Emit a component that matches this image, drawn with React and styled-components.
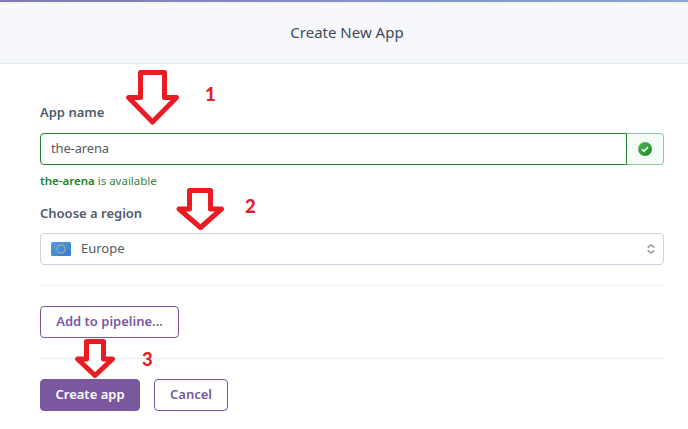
import React from 'react';
import styled, { createGlobalStyle } from 'styled-components';

const GlobalStyle = createGlobalStyle`
  * { box-sizing: border-box; }
  body {
    margin: 0;
    background: #fff;
    font-family: "Noto Sans", "Open Sans", sans-serif;
    font-size: 13px;
    color: #596981;
  }
`;

const Page = styled.div`
  position: relative;
  width: 688px;
  height: 429px;
  overflow: hidden;
  background: #fff;
`;

const Header = styled.header`
  height: 64px;
  padding: 1px 0 0 6px;
  display: flex;
  align-items: center;
  justify-content: center;
  background: linear-gradient(#eeeff6, #f7f8fc 5px);
  border-bottom: 1px solid #e3e7ef;
  position: relative;
`;

const AccentBar = styled.div`
  position: absolute;
  inset: 0 0 auto 0;
  height: 2px;
  background: linear-gradient(90deg, #8078b4, #8494c8 60%, #8ba6d2);
`;

const Title = styled.h1`
  margin: 0;
  font-size: 15px;
  font-weight: 400;
  line-height: 20px;
  color: #3f4a5a;
`;

const Form = styled.form`
  display: flex;
  flex-direction: column;
  width: 624px;
  margin-left: 40px;
  padding-top: 38px;
`;

const Label = styled.label`
  height: 20px;
  line-height: 20px;
  font-weight: 600;
  color: #4f5b6c;
`;

const InputGroup = styled.div`
  display: flex;
  height: 32px;
  margin-top: 11px;
`;

const TextInput = styled.input`
  width: 587px;
  height: 32px;
  padding: 0 10px 2px;
  border: 1px solid #24802c;
  border-radius: 4px 0 0 4px;
  outline: none;
  background: #fff;
  font: inherit;
  color: #565b66;
  letter-spacing: -0.15px;
`;

const InputStatus = styled.div`
  flex: 1;
  display: flex;
  align-items: center;
  justify-content: center;
  background: #f5fbf7;
  border: 1px solid #92c99c;
  border-left: 0;
  border-radius: 0 4px 4px 0;
`;

const Hint = styled.div`
  height: 16px;
  margin: 8px 0 14px;
  line-height: 16px;
  font-size: 11.5px;
  color: #3c8245;
  strong { font-weight: 600; color: #22802b; }
`;

const Select = styled.div`
  height: 32px;
  margin-top: 10px;
  padding: 0 8px 0 10px;
  display: flex;
  align-items: center;
  border: 1px solid #cfd0e0;
  border-radius: 4px;
  background: #fff;
  color: #565b66;
`;

const SelectValue = styled.span`
  flex: 1;
  margin-left: 10px;
  padding-bottom: 2px;
`;

const Divider = styled.hr`
  width: 100%;
  height: 1px;
  margin: 20px 0;
  border: 0;
  background: #ebeef3;
`;

const Actions = styled.div`
  display: flex;
  gap: 14px;
`;

const Button = styled.button`
  width: ${(p) => p.$width}px;
  height: 32px;
  padding: 0 0 2px;
  border: 1px solid #79589f;
  border-radius: 4px;
  background: ${(p) => (p.$primary ? '#79589f' : '#fff')};
  color: ${(p) => (p.$primary ? '#fff' : '#79589f')};
  font: inherit;
  font-weight: 600;
  white-space: nowrap;
`;

const Annotation = styled.div`
  position: absolute;
  left: ${(p) => p.$x}px;
  top: ${(p) => p.$y}px;
  line-height: 0;
`;

const StepNumber = styled(Annotation)`
  font: 900 18.5px/24px Lato, sans-serif;
  color: #de2228;
`;

function Arrow({ x, y, width, height, points }) {
  return (
    <Annotation $x={x} $y={y}>
      <svg width={width} height={height} viewBox={`0 0 ${width} ${height}`}>
        <polygon points={points} fill="#fff" stroke="#e91c24" strokeWidth="5" strokeLinejoin="round" />
      </svg>
    </Annotation>
  );
}

function CheckIcon() {
  return (
    <svg width="14" height="14" viewBox="0 0 14 14">
      <defs>
        <linearGradient id="check" x1="0" y1="0" x2="1" y2="1">
          <stop offset="0" stopColor="#5fb45f" />
          <stop offset="1" stopColor="#168a22" />
        </linearGradient>
      </defs>
      <circle cx="7" cy="7" r="7" fill="url(#check)" />
      <path d="M4 7.4 6 9.2 10 5" fill="none" stroke="#fff" strokeWidth="1.6" />
    </svg>
  );
}

function EuropeFlag() {
  const stars = Array.from({ length: 12 }, (_, i) => (i * Math.PI) / 6);
  return (
    <svg width="20" height="14" viewBox="0 0 20 14">
      <defs>
        <linearGradient id="flag" x1="0" y1="0" x2="1" y2="1">
          <stop offset="0" stopColor="#559be2" />
          <stop offset="1" stopColor="#367bd4" />
        </linearGradient>
      </defs>
      <rect width="20" height="14" rx="1.5" fill="url(#flag)" />
      {stars.map((a) => (
        <circle key={a} cx={10 + 4 * Math.cos(a)} cy={7 + 4 * Math.sin(a)} r="0.8" fill="#c6c055" />
      ))}
    </svg>
  );
}

function SortIcon() {
  return (
    <svg width="8" height="10" viewBox="0 0 8 10" fill="none" stroke="#8c96a9" strokeWidth="1.4">
      <path d="M.7 3.6 4 .9 7.3 3.6M.7 6.4 4 9.1 7.3 6.4" />
    </svg>
  );
}

export default function App() {
  return (
    <Page>
      <GlobalStyle />
      <Header>
        <AccentBar />
        <Title>Create New App</Title>
      </Header>
      <Form onSubmit={(e) => e.preventDefault()}>
        <Label htmlFor="name">App name</Label>
        <InputGroup>
          <TextInput id="name" defaultValue="the-arena" />
          <InputStatus><CheckIcon /></InputStatus>
        </InputGroup>
        <Hint><strong>the-arena</strong> is available</Hint>
        <Label>Choose a region</Label>
        <Select>
          <EuropeFlag />
          <SelectValue>Europe</SelectValue>
          <SortIcon />
        </Select>
        <Divider />
        <Actions><Button type="button" $width={139}>Add to pipeline...</Button></Actions>
        <Divider />
        <Actions>
          <Button $primary $width={100}>Create app</Button>
          <Button type="button" $width={74}>Cancel</Button>
        </Actions>
      </Form>
      <Arrow x={124} y={68} width={58} height={60}
        points="16.5,4.5 40.5,4.5 40.5,29.5 52.5,29.5 28.5,54 4.5,29.5 16.5,29.5" />
      <Arrow x={174} y={186} width={54} height={46}
        points="15.5,4.5 36.5,4.5 36.5,23 47.5,23 26.5,41.5 5,23 15.5,23" />
      <Arrow x={73} y={337} width={46} height={44}
        points="13.5,4.5 30.5,4.5 30.5,22 39.5,22 22,38.5 4.5,22 13.5,22" />
      <StepNumber $x={205} $y={82}>1</StepNumber>
      <StepNumber $x={245} $y={194}>2</StepNumber>
      <StepNumber $x={142} $y={347}>3</StepNumber>
    </Page>
  );
}
